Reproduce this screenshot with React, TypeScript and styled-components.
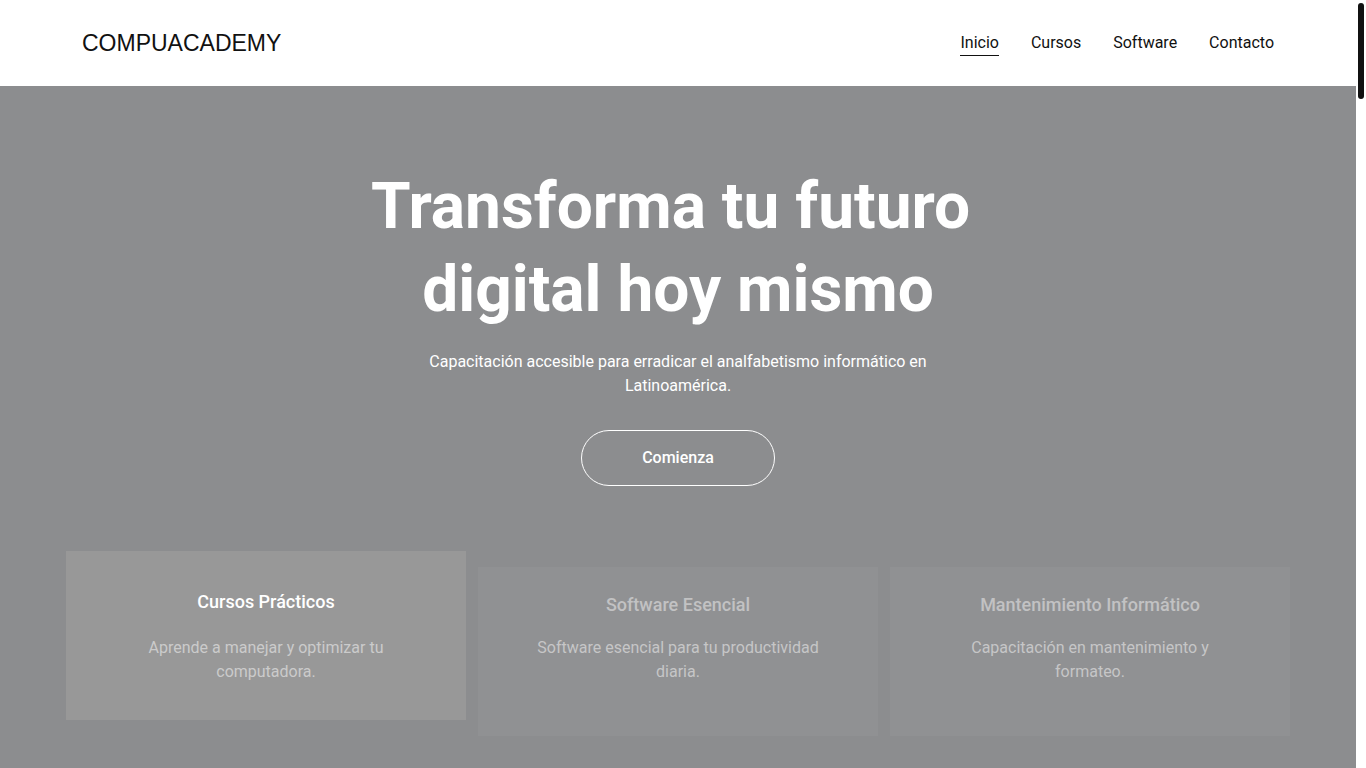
import React from 'react';
import styled, { createGlobalStyle } from 'styled-components';

const GlobalStyle = createGlobalStyle`
  html, body {
    margin: 0;
    padding: 0;
  }
  body {
    font-family: Roboto, "Noto Sans", sans-serif;
    background: #ffffff;
    color: #111111;
  }
  * {
    box-sizing: border-box;
  }
`;

// the page leaves a 10px white gutter on the right for the scrollbar track
const Page = styled.div`
  margin-right: 10px;
`;

const ScrollThumb = styled.div`
  position: fixed;
  top: 3px;
  right: 2px;
  width: 6px;
  height: 96px;
  border-radius: 3px;
  background: #111111;
  z-index: 10;
`;

const Header = styled.header`
  height: 86px;
  background: #ffffff;
  display: flex;
  align-items: center;
  justify-content: space-between;
  padding: 0 82px;
`;

const Logo = styled.div`
  font-family: "Liberation Sans", Arial, sans-serif;
  font-size: 23px;
  color: #111111;
`;

const Nav = styled.nav`
  display: flex;
  gap: 32px;
  margin-top: -2px;
`;

const NavLink = styled.a<{ $active?: boolean }>`
  font-size: 16px;
  color: #111111;
  text-decoration: none;
  padding: 4px 0 3px;
  border-bottom: 1px solid ${p => (p.$active ? '#111111' : 'transparent')};
  cursor: pointer;
`;

const Hero = styled.section`
  background: #8c8d8f;
  padding: 79px 66px 90px;
  display: flex;
  flex-direction: column;
  align-items: center;
  text-align: center;
`;

const Title = styled.h1`
  margin: 0;
  max-width: 720px;
  font-size: 64px;
  line-height: 1.3;
  font-weight: 700;
  color: #ffffff;
`;

const TitleLine = styled.span<{ $shift?: number }>`
  display: block;
  margin-right: ${p => p.$shift ?? 0}px;
`;

const Subtitle = styled.p`
  margin: 19px 0 0;
  max-width: 500px;
  font-size: 16px;
  line-height: 24px;
  color: #ffffff;
`;

const StartButton = styled.button`
  margin-top: 32px;
  padding: 16px 60px;
  font-family: Roboto, sans-serif;
  font-size: 16px;
  line-height: 22px;
  font-weight: 500;
  color: #ffffff;
  background: transparent;
  border: 1px solid #ffffff;
  border-radius: 28px;
  cursor: pointer;
`;

const Cards = styled.div`
  margin-top: 81px;
  display: grid;
  grid-template-columns: repeat(3, 400px);
  gap: 12px;
  align-items: start;
`;

const Card = styled.div<{ $raised?: boolean }>`
  height: 169px;
  padding: ${p => (p.$raised ? '40px 40px 0' : '27px 40px 0')};
  background: ${p => (p.$raised ? '#989898' : '#909193')};
  transform: ${p => (p.$raised ? 'translateY(-16px)' : 'none')};
`;

const CardTitle = styled.h3<{ $raised?: boolean }>`
  margin: 0 0 ${p => (p.$raised ? '23px' : '20px')};
  font-size: 18px;
  line-height: 22px;
  font-weight: 500;
  color: ${p => (p.$raised ? '#ffffff' : '#c2c2c3')};
`;

const CardText = styled.p<{ $raised?: boolean }>`
  margin: 0 auto;
  max-width: 300px;
  font-size: 16px;
  line-height: 24px;
  color: ${p => (p.$raised ? '#cbcbcb' : '#c6c6c7')};
`;

const Section = styled.section<{ $dark?: boolean }>`
  min-height: 1300px;
  padding: 100px 82px;
  background: ${p => (p.$dark ? '#f3f3f3' : '#ffffff')};
  text-align: center;
`;

const SectionTitle = styled.h2`
  margin: 0 0 20px;
  font-size: 40px;
  font-weight: 700;
  color: #111111;
`;

const SectionText = styled.p`
  margin: 0 auto;
  max-width: 600px;
  font-size: 16px;
  line-height: 24px;
  color: #555555;
`;

const Footer = styled.footer`
  padding: 40px 82px;
  background: #111111;
  color: #cccccc;
  font-size: 14px;
  text-align: center;
`;

const features = [
  { title: 'Cursos Prácticos', text: 'Aprende a manejar y optimizar tu computadora.', raised: true },
  { title: 'Software Esencial', text: 'Software esencial para tu productividad diaria.', raised: false },
  { title: 'Mantenimiento Informático', text: 'Capacitación en mantenimiento y formateo.', raised: false },
];

const App = () => {
  return (
    <Page>
      <GlobalStyle />
      <ScrollThumb />
      <Header>
        <Logo>COMPUACADEMY</Logo>
        <Nav>
          <NavLink $active>Inicio</NavLink>
          <NavLink>Cursos</NavLink>
          <NavLink>Software</NavLink>
          <NavLink>Contacto</NavLink>
        </Nav>
      </Header>
      <Hero>
        <Title>
          <TitleLine $shift={15}>Transforma tu futuro</TitleLine>
          <TitleLine>digital hoy mismo</TitleLine>
        </Title>
        <Subtitle>Capacitación accesible para erradicar el analfabetismo informático en Latinoamérica.</Subtitle>
        <StartButton>Comienza</StartButton>
        <Cards>
          {features.map(f => (
            <Card key={f.title} $raised={f.raised}>
              <CardTitle $raised={f.raised}>{f.title}</CardTitle>
              <CardText $raised={f.raised}>{f.text}</CardText>
            </Card>
          ))}
        </Cards>
      </Hero>
      <Section>
        <SectionTitle>Cursos</SectionTitle>
        <SectionText>Aprende desde lo básico hasta herramientas avanzadas para tu día a día.</SectionText>
      </Section>
      <Section $dark>
        <SectionTitle>Software</SectionTitle>
        <SectionText>Los programas esenciales para estudiar, trabajar y crear.</SectionText>
      </Section>
      <Section>
        <SectionTitle>Contacto</SectionTitle>
        <SectionText>Escríbenos y comienza tu capacitación hoy mismo.</SectionText>
      </Section>
      <Section $dark>
        <SectionTitle>Comunidad</SectionTitle>
        <SectionText>Únete a miles de estudiantes en toda Latinoamérica.</SectionText>
      </Section>
      <Footer>© 2024 COMPUACADEMY. Todos los derechos reservados.</Footer>
    </Page>
  );
};

export default App;
